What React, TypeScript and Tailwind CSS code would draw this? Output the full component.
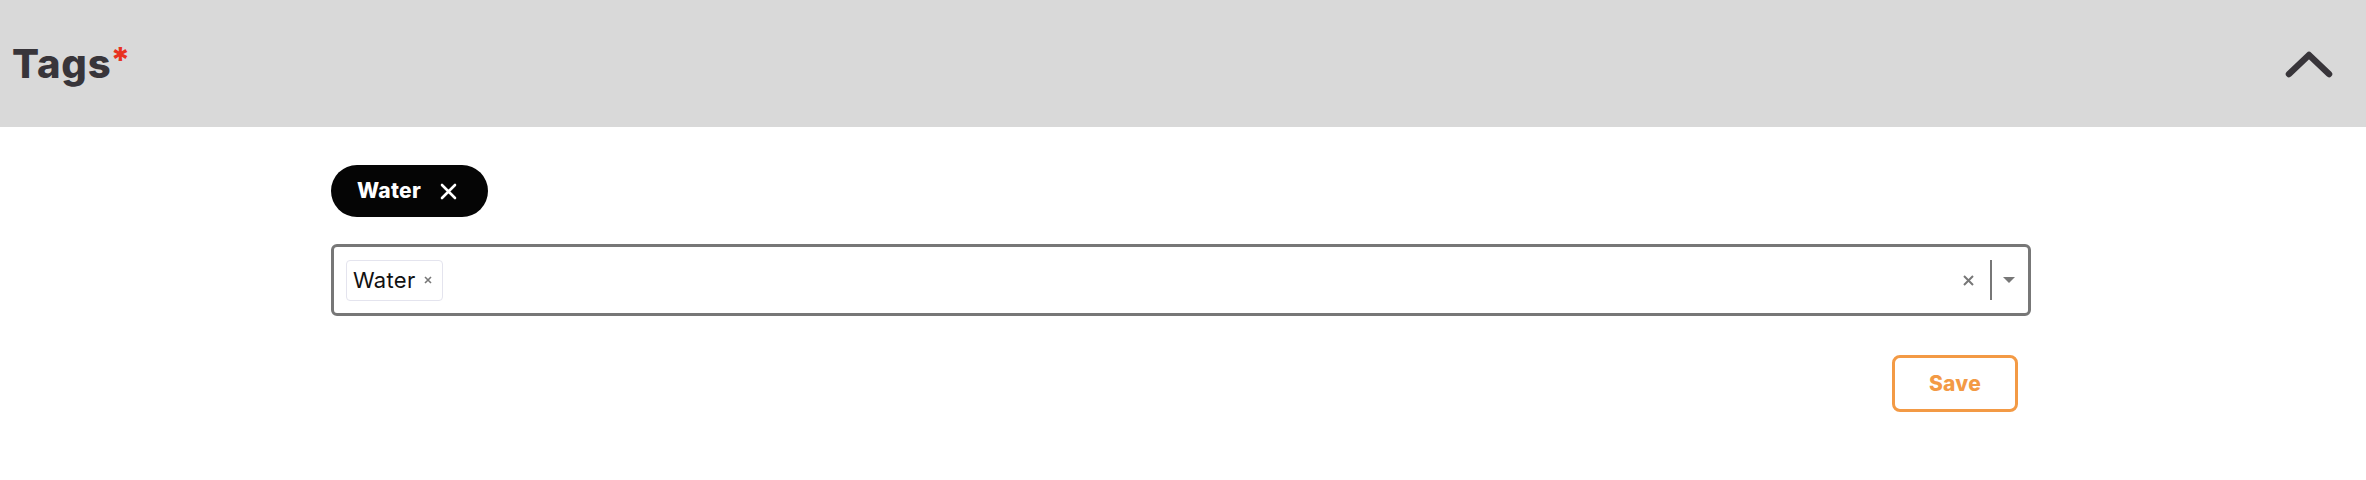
import React, { useState } from 'react';

const font = { fontFamily: 'Inter, "Noto Sans", sans-serif' };

const App: React.FC = () => {
  const [tags, setTags] = useState<string[]>(['Water']);
  const [open, setOpen] = useState(true);

  return (
    <div className="w-full min-h-[480px] bg-white" style={font}>
      <div className="flex items-center justify-between h-[127px] bg-[#d9d9d9] pl-[12px] pr-[33px]">
        <h2 className="text-[40px] leading-none font-extrabold text-[#38353a] tracking-[0.8px] flex items-start">
          Tags<span className="text-[#e8321f] text-[34px] font-extrabold leading-none -mt-[1px] -ml-[1px]">*</span>
        </h2>
        <button onClick={() => setOpen(!open)} className="text-[#38353a]">
          <svg width="48" height="28" viewBox="0 0 48 28" fill="none">
            <path d="M4 24 L24 5 L44 24" stroke="currentColor" strokeWidth="6.5" strokeLinecap="round" strokeLinejoin="round" />
          </svg>
        </button>
      </div>

      {open && (
        <div className="w-[1700px] ml-[331px] pt-[38px]">
          <div className="flex gap-2">
            {tags.map(t => (
              <div key={t} className="h-[52px] rounded-full bg-[#050505] text-white flex items-center pl-[26px] pr-[31px] gap-[19px]">
                <span className="text-[21px] font-extrabold tracking-[0.3px]">{t}</span>
                <svg width="17" height="17" viewBox="0 0 17 17">
                  <path d="M2 2 L15 15 M15 2 L2 15" stroke="white" strokeWidth="2.6" strokeLinecap="round" />
                </svg>
              </div>
            ))}
          </div>

          <div className="mt-[27px] h-[72px] border-[3px] border-[#777777] rounded-[6px] flex items-center pl-[12px] pr-[13px]">
            <div className="flex-1 flex items-center gap-1">
              {tags.map(t => (
                <div key={t} className="h-[41px] border border-[#e4e4ee] rounded-[4px] flex items-center pl-[6px] pr-[10px] gap-[8px]">
                  <span className="text-[22px] text-[#111] tracking-[0.3px]">{t}</span>
                  <svg width="8" height="8" viewBox="0 0 8 8">
                    <path d="M1 1 L7 7 M7 1 L1 7" stroke="#777" strokeWidth="1.6" />
                  </svg>
                </div>
              ))}
            </div>
            <button onClick={() => setTags([])} className="flex items-center">
              <svg width="11" height="11" viewBox="0 0 11 11">
                <path d="M1 1 L10 10 M10 1 L1 10" stroke="#777" strokeWidth="2" />
              </svg>
            </button>
            <div className="w-[2px] h-[40px] bg-[#777] ml-[16px] mr-[11px]" />
            <svg width="12" height="7" viewBox="0 0 12 7">
              <path d="M0 0 L12 0 L6 6 Z" fill="#777" />
            </svg>
          </div>

          <div className="flex justify-end pr-[13px] mt-[39px]">
            <button className="w-[126px] h-[57px] border-[3px] border-[#f39a45] rounded-[8px] text-[#f39a45] text-[21px] font-extrabold tracking-[0.3px]">
              Save
            </button>
          </div>
        </div>
      )}
    </div>
  );
};

export default App;
